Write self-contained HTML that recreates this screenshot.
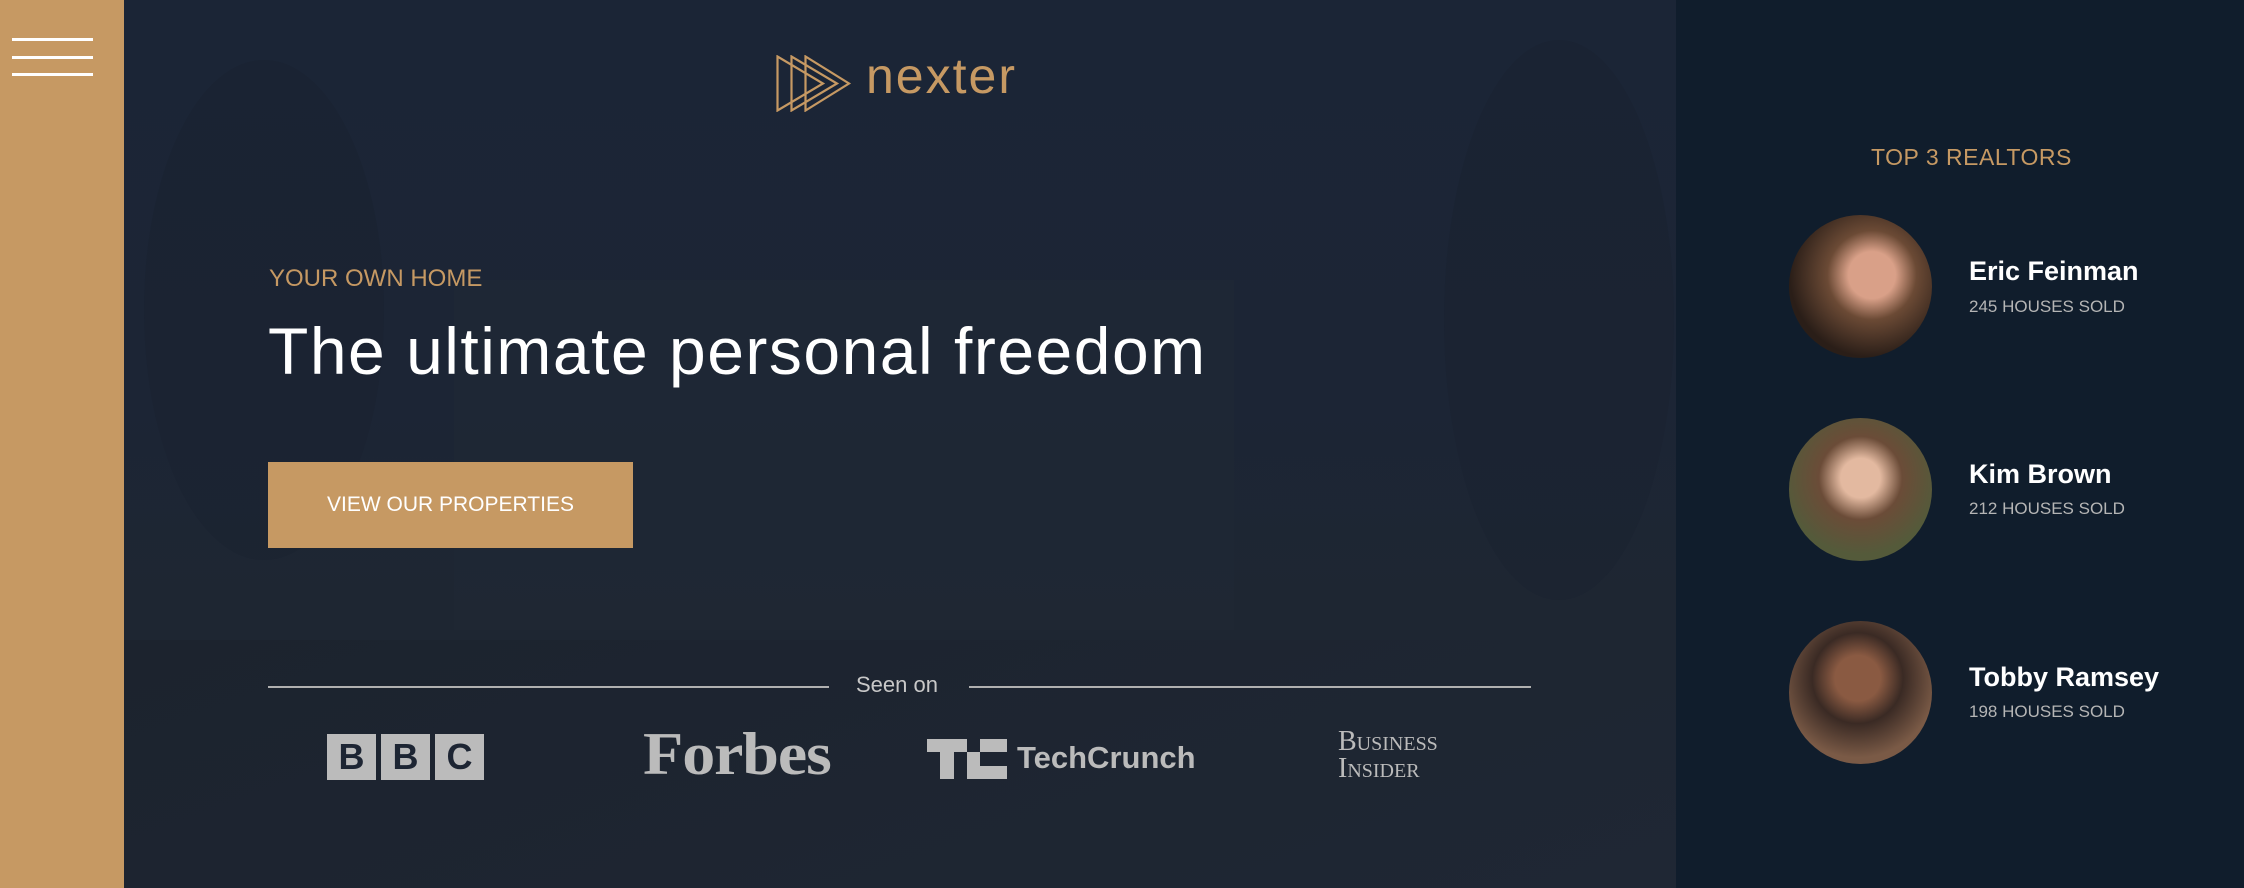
<!DOCTYPE html>
<html><head><meta charset="utf-8"><style>
*{margin:0;padding:0;box-sizing:border-box}
body{width:2244px;height:888px;overflow:hidden;background:#101d2c;font-family:"Liberation Sans",sans-serif;position:relative}
.side{position:absolute;left:0;top:0;width:124px;height:888px;background:#c69963}
.ham{position:absolute;left:12px;width:81px;height:3px;background:#fff}
.main{position:absolute;left:124px;top:0;width:1552px;height:888px;overflow:hidden;
background:linear-gradient(180deg,#1b2536 0%,#1c2535 45%,#1e2632 70%,#1d2531 100%)}
.t{position:absolute;border-radius:50%;background:#19212f;opacity:.5}
.right{position:absolute;left:1676px;top:0;width:568px;height:888px;background:#101d2c}
.abs{position:absolute;white-space:nowrap}
.av{position:absolute;left:1789px;width:143px;height:143px;border-radius:50%}
.nm{position:absolute;left:1969px;color:#fff;font-size:27px;font-weight:bold}
.sd{position:absolute;left:1969px;color:#b5b5b5;font-size:17px}
.line{position:absolute;top:686px;height:2px;background:#b0b0b0}
</style></head><body>
<div class="side">
<div class="ham" style="top:38px"></div><div class="ham" style="top:56px"></div><div class="ham" style="top:73px"></div>
</div>
<div class="main">
<div class="t" style="left:20px;top:60px;width:240px;height:500px"></div>
<div class="t" style="left:1320px;top:40px;width:230px;height:560px"></div>
<div style="position:absolute;left:330px;top:280px;width:780px;height:350px;background:#222a37;opacity:.35"></div>
<div style="position:absolute;left:0;top:640px;width:1552px;height:248px;background:linear-gradient(160deg,#1c232e,#1f2734)"></div>
</div>
<svg class="abs" style="left:776px;top:55px" width="76" height="57" viewBox="0 0 76 57">
<g fill="none" stroke="#c69963" stroke-width="2.2">
<path d="M1.5 1.5V55.5L47 28.5Z"/><path d="M15.5 1.5V55.5L61 28.5Z"/><path d="M29.5 1.5V55.5L73 28.5Z"/>
</g></svg>
<div class="abs" style="left:866px;top:47px;font-size:50px;color:#c69963;letter-spacing:2px">nexter</div>
<div class="abs" style="left:269px;top:265px;font-size:24px;color:#c69963">YOUR OWN HOME</div>
<div class="abs" style="left:268px;top:313px;font-size:66px;color:#fff;letter-spacing:1.5px">The ultimate personal freedom</div>
<div class="abs" style="left:268px;top:462px;width:365px;height:86px;background:#c69963;color:#fff;font-size:21px;text-align:center;line-height:86px">VIEW OUR PROPERTIES</div>
<div class="line" style="left:268px;width:561px"></div>
<div class="abs" style="left:856px;top:672px;font-size:22px;color:#c8c8c8">Seen on</div>
<div class="line" style="left:969px;width:562px"></div>
<div class="abs" style="left:327px;top:734px;display:flex;gap:5px">
<div style="width:49px;height:46px;background:#bbb;color:#1d2533;font-weight:bold;font-size:36px;text-align:center;line-height:46px">B</div>
<div style="width:49px;height:46px;background:#bbb;color:#1d2533;font-weight:bold;font-size:36px;text-align:center;line-height:46px">B</div>
<div style="width:49px;height:46px;background:#bbb;color:#1d2533;font-weight:bold;font-size:36px;text-align:center;line-height:46px">C</div>
</div>
<div class="abs" style="left:643px;top:720px;font-family:'Liberation Serif',serif;font-weight:bold;font-size:60px;color:#bbb;letter-spacing:-1px;transform:scaleX(1.1);transform-origin:left">Forbes</div>
<svg class="abs" style="left:927px;top:739px" width="80" height="40"><path fill="#bbb" d="M0 0H40V13H27V40H13V13H0ZM40 13H53V27H80V40H40ZM53 0H80V13H53Z"/></svg>
<div class="abs" style="left:1017px;top:740px;font-weight:bold;font-size:31px;color:#bbb">TechCrunch</div>
<div class="abs" style="left:1338px;top:728px;font-family:'Liberation Serif',serif;font-size:28px;color:#bbb;line-height:27px;font-variant:small-caps">Business<br>Insider</div>
<div class="right"></div>
<div class="abs" style="left:1871px;top:144px;font-size:23px;color:#c69963;letter-spacing:0.5px">TOP 3 REALTORS</div>
<div class="av" style="top:215px;background:radial-gradient(circle at 58% 42%,#d9a088 0 20%,#6b4a35 38%,#2a1e18 70%)"></div>
<div class="av" style="top:418px;background:radial-gradient(circle at 50% 42%,#e3b9a0 0 18%,#6b4c38 38%,#545a3a 70%)"></div>
<div class="av" style="top:621px;background:radial-gradient(circle at 48% 40%,#8a5a42 0 20%,#3a2a24 40%,#7a5a46 70%)"></div>
<div class="nm" style="top:256px">Eric Feinman</div><div class="sd" style="top:297px">245 HOUSES SOLD</div>
<div class="nm" style="top:459px">Kim Brown</div><div class="sd" style="top:499px">212 HOUSES SOLD</div>
<div class="nm" style="top:662px">Tobby Ramsey</div><div class="sd" style="top:702px">198 HOUSES SOLD</div>
</body></html>
